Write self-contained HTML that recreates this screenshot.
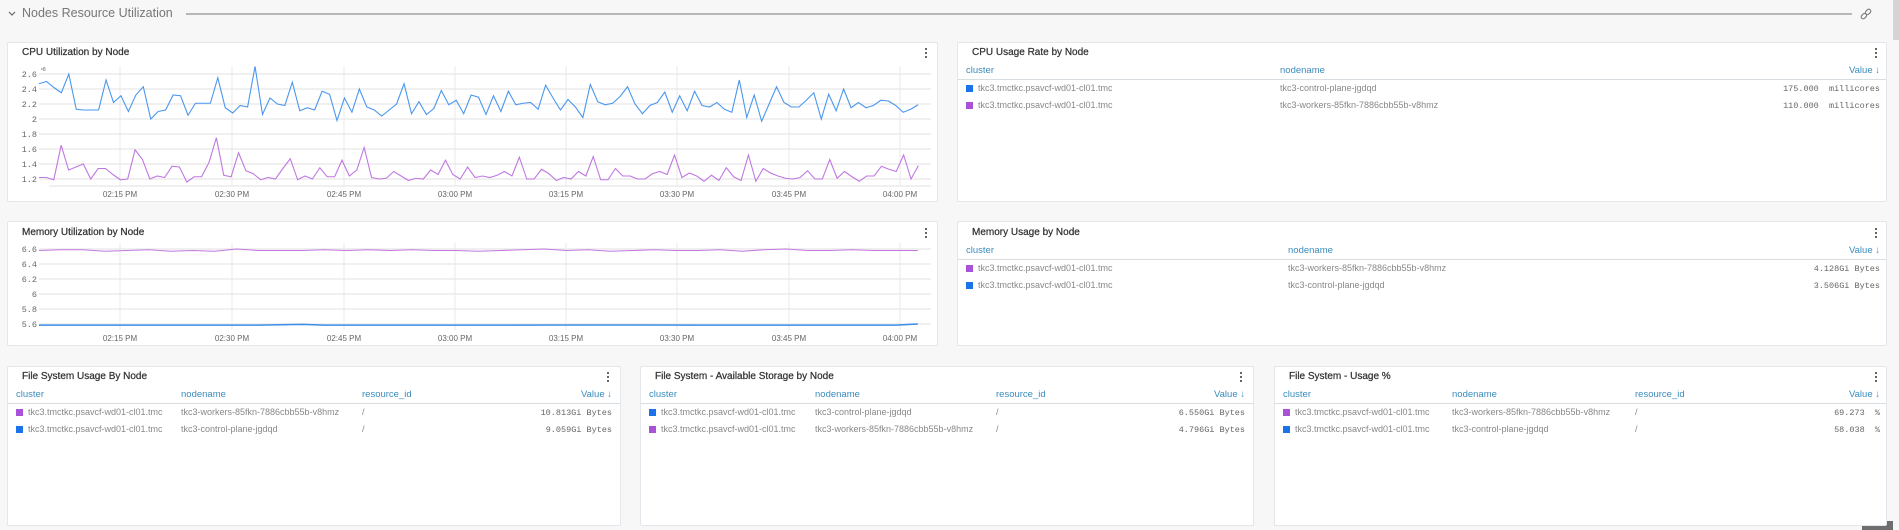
<!DOCTYPE html>
<html><head><meta charset="utf-8"><style>
*{margin:0;padding:0;box-sizing:border-box}
body{width:1899px;height:530px;background:#f7f7f7;font-family:"Liberation Sans",sans-serif;position:relative;overflow:hidden}
.p{position:absolute;background:#fff;border:1px solid #e3e6ea;border-radius:2px}
.t{position:absolute;font-size:10px;color:#333;-webkit-text-stroke:0.25px #333}
.k{position:absolute;width:3px}
.k i{display:block;width:2px;height:2px;background:#666;margin-bottom:2px}
.a{position:absolute;font-size:9px;white-space:nowrap}
.h{color:#3a8bbd;font-size:9.5px}
.r{color:#888}
.m{font-family:"Liberation Mono",monospace;font-size:8.5px;color:#666}
.sq{position:absolute;width:7px;height:7px}
.hl{position:absolute;height:1px;background:#d8dde2}
</style></head><body>
<svg style="position:absolute;left:0;top:0" width="1899" height="530">
<path d="M9 12 l3 3 l3 -3" fill="none" stroke="#666" stroke-width="1.2"/>
<line x1="186" y1="14" x2="1852" y2="14" stroke="#777" stroke-width="1"/>
<g transform="translate(1866,14) rotate(-45)" fill="none" stroke="#777" stroke-width="1.1"><rect x="-6" y="-2" width="6" height="4" rx="2"/><rect x="0" y="-2" width="6" height="4" rx="2"/></g>
<rect x="1893" y="0" width="6" height="40" fill="#d4d4d4"/>
<rect x="1862" y="521" width="31" height="9" fill="#6e6e6e"/>
</svg>

<div class="p" style="left:7px;top:42px;width:931px;height:160px"></div>
<div class="p" style="left:957px;top:42px;width:930px;height:160px"></div>
<div class="p" style="left:7px;top:221px;width:931px;height:125px"></div>
<div class="p" style="left:957px;top:221px;width:930px;height:125px"></div>
<div class="p" style="left:7px;top:366px;width:614px;height:160px"></div>
<div class="p" style="left:640px;top:366px;width:614px;height:160px"></div>
<div class="p" style="left:1274px;top:366px;width:613px;height:160px"></div>

<svg style="position:absolute;left:0;top:0" width="1899" height="530" font-family="Liberation Sans" font-size="9" fill="#666">
<g stroke="#ececec" stroke-width="1.5">
<line x1="39" x2="931" y1="74" y2="74"/><line x1="39" x2="931" y1="89" y2="89"/><line x1="39" x2="931" y1="104" y2="104"/><line x1="39" x2="931" y1="119" y2="119"/><line x1="39" x2="931" y1="134" y2="134"/><line x1="39" x2="931" y1="149" y2="149"/><line x1="39" x2="931" y1="164" y2="164"/><line x1="39" x2="931" y1="179" y2="179"/>
<line x1="49" x2="931" y1="186" y2="186"/>
<line x1="39" x2="931" y1="249" y2="249"/><line x1="39" x2="931" y1="264" y2="264"/><line x1="39" x2="931" y1="279" y2="279"/><line x1="39" x2="931" y1="294" y2="294"/><line x1="39" x2="931" y1="309" y2="309"/><line x1="39" x2="931" y1="324" y2="324"/>
</g>
<g stroke="#e8e8e8" stroke-width="1">
<path d="M120 66V186M232 66V186M344 66V186M455 66V186M566 66V186M677 66V186M789 66V186M900 66V186"/>
<path d="M120 243V330M232 243V330M344 243V330M455 243V330M566 243V330M677 243V330M789 243V330M900 243V330"/>
</g>
<g text-anchor="end" font-family="Liberation Mono" font-size="8.5">
<text x="37" y="77">2.6</text><text x="37" y="92">2.4</text><text x="37" y="107">2.2</text><text x="37" y="122">2</text><text x="37" y="137">1.8</text><text x="37" y="152">1.6</text><text x="37" y="167">1.4</text><text x="37" y="182">1.2</text>
<text x="37" y="252">6.6</text><text x="37" y="267">6.4</text><text x="37" y="282">6.2</text><text x="37" y="297">6</text><text x="37" y="312">5.8</text><text x="37" y="327">5.6</text>
</g>
<text x="41" y="71" font-size="5">ᵉ8</text>
<g text-anchor="middle" font-size="8">
<text x="120" y="197">02:15 PM</text><text x="232" y="197">02:30 PM</text><text x="344" y="197">02:45 PM</text><text x="455" y="197">03:00 PM</text><text x="566" y="197">03:15 PM</text><text x="677" y="197">03:30 PM</text><text x="789" y="197">03:45 PM</text><text x="900" y="197">04:00 PM</text>
<text x="120" y="341">02:15 PM</text><text x="232" y="341">02:30 PM</text><text x="344" y="341">02:45 PM</text><text x="455" y="341">03:00 PM</text><text x="566" y="341">03:15 PM</text><text x="677" y="341">03:30 PM</text><text x="789" y="341">03:45 PM</text><text x="900" y="341">04:00 PM</text>
</g>
<g fill="none" stroke-width="1.1">
<polyline transform="translate(39,269) scale(7.45,-75)" vector-effect="non-scaling-stroke" stroke="#4b97ef" points="0,2.47 1,2.50 2,2.42 3,2.35 4,2.60 5,2.13 6,2.12 7,2.12 8,2.12 9,2.52 10,2.22 11,2.31 12,2.10 13,2.32 14,2.43 15,2.00 16,2.10 17,2.12 18,2.32 19,2.31 20,2.05 21,2.21 22,2.21 23,2.21 24,2.55 25,2.15 26,2.08 27,2.18 28,2.16 29,2.70 30,2.06 31,2.28 32,2.20 33,2.18 34,2.49 35,2.11 36,2.15 37,2.12 38,2.37 39,2.33 40,1.98 41,2.28 42,2.09 43,2.40 44,2.16 45,2.12 46,2.04 47,2.12 48,2.20 49,2.47 50,2.07 51,2.23 52,2.06 53,2.14 54,2.38 55,2.19 56,2.25 57,2.07 58,2.32 59,2.29 60,2.06 61,2.31 62,2.10 63,2.37 64,2.19 65,2.21 66,2.22 67,2.13 68,2.45 69,2.28 70,2.12 71,2.26 72,2.16 73,2.02 74,2.46 75,2.23 76,2.19 77,2.21 78,2.30 79,2.43 80,2.20 81,2.07 82,2.18 83,2.22 84,2.36 85,2.09 86,2.31 87,2.11 88,2.37 89,2.18 90,2.16 91,2.22 92,2.13 93,2.09 94,2.52 95,2.02 96,2.32 97,1.97 98,2.20 99,2.43 100,2.22 101,2.16 102,2.16 103,2.25 104,2.35 105,2.00 106,2.33 107,2.11 108,2.40 109,2.15 110,2.22 111,2.15 112,2.18 113,2.25 114,2.24 115,2.18 116,2.09 117,2.13 118,2.19"/>
<polyline transform="translate(39,269) scale(7.39,-75)" vector-effect="non-scaling-stroke" stroke="#c078e0" points="0,1.22 1,1.22 2,1.19 3,1.65 4,1.32 5,1.36 6,1.40 7,1.20 8,1.34 9,1.34 10,1.26 11,1.19 12,1.20 13,1.59 14,1.46 15,1.20 16,1.24 17,1.22 18,1.37 19,1.36 20,1.16 21,1.23 22,1.23 23,1.42 24,1.75 25,1.25 26,1.23 27,1.55 28,1.31 29,1.27 30,1.19 31,1.22 32,1.20 33,1.34 34,1.47 35,1.19 36,1.24 37,1.20 38,1.35 39,1.23 40,1.23 41,1.45 42,1.24 43,1.32 44,1.62 45,1.22 46,1.20 47,1.21 48,1.30 49,1.24 50,1.18 51,1.21 52,1.20 53,1.32 54,1.26 55,1.45 56,1.26 57,1.20 58,1.36 59,1.22 60,1.24 61,1.22 62,1.25 63,1.30 64,1.24 65,1.49 66,1.20 67,1.20 68,1.33 69,1.27 70,1.18 71,1.22 72,1.20 73,1.30 74,1.24 75,1.50 76,1.19 77,1.19 78,1.34 79,1.24 80,1.24 81,1.20 82,1.20 83,1.27 84,1.30 85,1.26 86,1.52 87,1.22 88,1.28 89,1.24 90,1.17 91,1.25 92,1.18 93,1.35 94,1.23 95,1.18 96,1.52 97,1.17 98,1.34 99,1.28 100,1.24 101,1.21 102,1.20 103,1.22 104,1.31 105,1.20 106,1.20 107,1.46 108,1.21 109,1.30 110,1.23 111,1.17 112,1.24 113,1.24 114,1.37 115,1.33 116,1.30 117,1.52 118,1.20 119,1.38"/>
<polyline transform="translate(39,744) scale(21.97,-75)" vector-effect="non-scaling-stroke" stroke="#c078e0" points="0,6.58 1,6.59 2,6.59 3,6.57 4,6.58 5,6.59 6,6.57 7,6.58 8,6.57 9,6.60 10,6.58 11,6.58 12,6.58 13,6.59 14,6.58 15,6.59 16,6.58 17,6.59 18,6.58 19,6.58 20,6.57 21,6.58 22,6.59 23,6.60 24,6.58 25,6.59 26,6.57 27,6.58 28,6.59 29,6.58 30,6.58 31,6.59 32,6.57 33,6.59 34,6.60 35,6.58 36,6.58 37,6.59 38,6.58 39,6.58 40,6.58"/>
<polyline transform="translate(39,744) scale(21.97,-75)" vector-effect="non-scaling-stroke" stroke="#3b8ee8" stroke-width="1.5" points="0,5.585 5,5.585 10,5.585 12,5.595 13,5.585 20,5.585 25,5.587 30,5.585 35,5.585 39,5.585 40,5.6"/>
</g>
</svg>

<div class="t" style="left:22px;top:47px">CPU Utilization by Node</div>
<div class="t" style="left:972px;top:47px">CPU Usage Rate by Node</div>
<div class="t" style="left:22px;top:227px">Memory Utilization by Node</div>
<div class="t" style="left:972px;top:227px">Memory Usage by Node</div>
<div class="t" style="left:22px;top:371px">File System Usage By Node</div>
<div class="t" style="left:655px;top:371px">File System - Available Storage by Node</div>
<div class="t" style="left:1289px;top:371px">File System - Usage %</div>

<div class="k" style="left:925px;top:48px"><i></i><i></i><i></i></div>
<div class="k" style="left:1875px;top:48px"><i></i><i></i><i></i></div>
<div class="k" style="left:925px;top:228px"><i></i><i></i><i></i></div>
<div class="k" style="left:1875px;top:228px"><i></i><i></i><i></i></div>
<div class="k" style="left:607px;top:372px"><i></i><i></i><i></i></div>
<div class="k" style="left:1240px;top:372px"><i></i><i></i><i></i></div>
<div class="k" style="left:1875px;top:372px"><i></i><i></i><i></i></div>

<div class="a h" style="left:966px;top:65px">cluster</div>
<div class="a h" style="left:1280px;top:65px">nodename</div>
<div class="a h" style="right:19px;top:65px">Value ↓</div>
<div class="hl" style="left:958px;top:79px;width:928px"></div>
<div class="sq" style="left:966px;top:85px;background:#1a73e8"></div>
<div class="a r" style="left:978px;top:83px">tkc3.tmctkc.psavcf-wd01-cl01.tmc</div>
<div class="a r" style="left:1280px;top:83px">tkc3-control-plane-jgdqd</div>
<div class="a m" style="right:19px;top:84px">175.000&nbsp;&nbsp;millicores</div>
<div class="sq" style="left:966px;top:102px;background:#a852d9"></div>
<div class="a r" style="left:978px;top:100px">tkc3.tmctkc.psavcf-wd01-cl01.tmc</div>
<div class="a r" style="left:1280px;top:100px">tkc3-workers-85fkn-7886cbb55b-v8hmz</div>
<div class="a m" style="right:19px;top:101px">110.000&nbsp;&nbsp;millicores</div>

<div class="a h" style="left:966px;top:245px">cluster</div>
<div class="a h" style="left:1288px;top:245px">nodename</div>
<div class="a h" style="right:19px;top:245px">Value ↓</div>
<div class="hl" style="left:958px;top:259px;width:928px"></div>
<div class="sq" style="left:966px;top:265px;background:#a852d9"></div>
<div class="a r" style="left:978px;top:263px">tkc3.tmctkc.psavcf-wd01-cl01.tmc</div>
<div class="a r" style="left:1288px;top:263px">tkc3-workers-85fkn-7886cbb55b-v8hmz</div>
<div class="a m" style="right:19px;top:264px">4.128Gi Bytes</div>
<div class="sq" style="left:966px;top:282px;background:#1a73e8"></div>
<div class="a r" style="left:978px;top:280px">tkc3.tmctkc.psavcf-wd01-cl01.tmc</div>
<div class="a r" style="left:1288px;top:280px">tkc3-control-plane-jgdqd</div>
<div class="a m" style="right:19px;top:281px">3.506Gi Bytes</div>

<div class="a h" style="left:16px;top:389px">cluster</div>
<div class="a h" style="left:181px;top:389px">nodename</div>
<div class="a h" style="left:362px;top:389px">resource_id</div>
<div class="a h" style="right:1287px;top:389px">Value ↓</div>
<div class="hl" style="left:8px;top:403px;width:612px"></div>
<div class="sq" style="left:16px;top:409px;background:#a852d9"></div>
<div class="a r" style="left:28px;top:407px">tkc3.tmctkc.psavcf-wd01-cl01.tmc</div>
<div class="a r" style="left:181px;top:407px">tkc3-workers-85fkn-7886cbb55b-v8hmz</div>
<div class="a r" style="left:362px;top:407px">/</div>
<div class="a m" style="right:1287px;top:408px">10.813Gi Bytes</div>
<div class="sq" style="left:16px;top:426px;background:#1a73e8"></div>
<div class="a r" style="left:28px;top:424px">tkc3.tmctkc.psavcf-wd01-cl01.tmc</div>
<div class="a r" style="left:181px;top:424px">tkc3-control-plane-jgdqd</div>
<div class="a r" style="left:362px;top:424px">/</div>
<div class="a m" style="right:1287px;top:425px">9.059Gi Bytes</div>

<div class="a h" style="left:649px;top:389px">cluster</div>
<div class="a h" style="left:815px;top:389px">nodename</div>
<div class="a h" style="left:996px;top:389px">resource_id</div>
<div class="a h" style="right:654px;top:389px">Value ↓</div>
<div class="hl" style="left:641px;top:403px;width:612px"></div>
<div class="sq" style="left:649px;top:409px;background:#1a73e8"></div>
<div class="a r" style="left:661px;top:407px">tkc3.tmctkc.psavcf-wd01-cl01.tmc</div>
<div class="a r" style="left:815px;top:407px">tkc3-control-plane-jgdqd</div>
<div class="a r" style="left:996px;top:407px">/</div>
<div class="a m" style="right:654px;top:408px">6.550Gi Bytes</div>
<div class="sq" style="left:649px;top:426px;background:#a852d9"></div>
<div class="a r" style="left:661px;top:424px">tkc3.tmctkc.psavcf-wd01-cl01.tmc</div>
<div class="a r" style="left:815px;top:424px">tkc3-workers-85fkn-7886cbb55b-v8hmz</div>
<div class="a r" style="left:996px;top:424px">/</div>
<div class="a m" style="right:654px;top:425px">4.796Gi Bytes</div>

<div class="a h" style="left:1283px;top:389px">cluster</div>
<div class="a h" style="left:1452px;top:389px">nodename</div>
<div class="a h" style="left:1635px;top:389px">resource_id</div>
<div class="a h" style="right:19px;top:389px">Value ↓</div>
<div class="hl" style="left:1275px;top:403px;width:611px"></div>
<div class="sq" style="left:1283px;top:409px;background:#a852d9"></div>
<div class="a r" style="left:1295px;top:407px">tkc3.tmctkc.psavcf-wd01-cl01.tmc</div>
<div class="a r" style="left:1452px;top:407px">tkc3-workers-85fkn-7886cbb55b-v8hmz</div>
<div class="a r" style="left:1635px;top:407px">/</div>
<div class="a m" style="right:19px;top:408px">69.273&nbsp;&nbsp;%</div>
<div class="sq" style="left:1283px;top:426px;background:#1a73e8"></div>
<div class="a r" style="left:1295px;top:424px">tkc3.tmctkc.psavcf-wd01-cl01.tmc</div>
<div class="a r" style="left:1452px;top:424px">tkc3-control-plane-jgdqd</div>
<div class="a r" style="left:1635px;top:424px">/</div>
<div class="a m" style="right:19px;top:425px">58.038&nbsp;&nbsp;%</div>

<div class="a" style="left:22px;top:6px;font-size:12.5px;color:#777">Nodes Resource Utilization</div>
</body></html>
